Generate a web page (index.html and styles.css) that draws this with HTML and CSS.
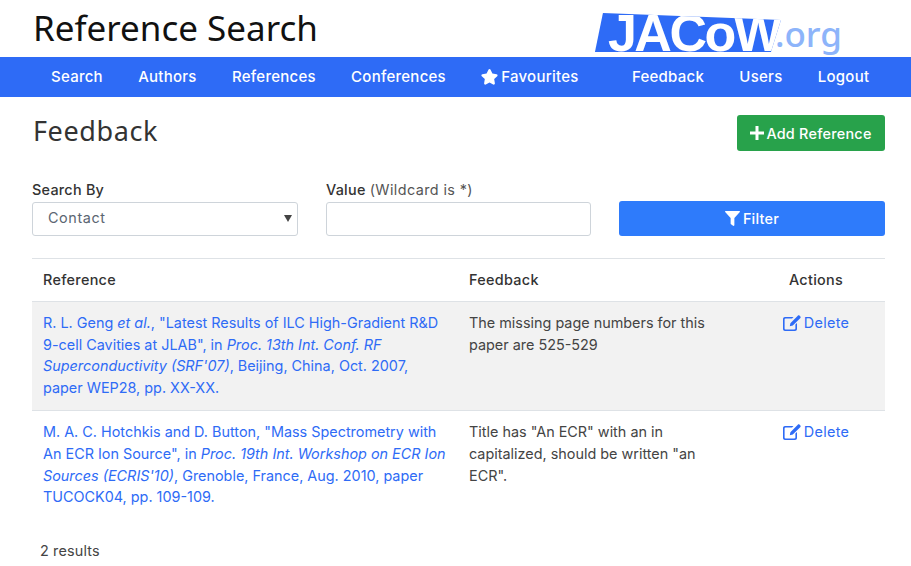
FILE: index.html
```html
<!DOCTYPE html>
<html lang="en">
<head>
  <meta charset="UTF-8" />
  <meta name="viewport" content="width=device-width, initial-scale=1.0"/>
  <title>Reference Search</title>
  <link rel="stylesheet" href="styles.css">
</head>
<body>

  <header class="top">
    <h1>Reference Search</h1>
    <a class="logo" href="#">
      <span class="logo-mark">JACoW</span><span class="logo-org">.org</span>
    </a>
  </header>

  <nav class="nav">
    <a href="#">Search</a>
    <a href="#">Authors</a>
    <a href="#">References</a>
    <a href="#">Conferences</a>
    <a href="#">
      <svg class="icon star" viewBox="0 0 24 24"><path d="M12 1.500c.7 0 1.200.4 1.500 1l2.600 5.400 5.900.8c1.400.2 1.900 1.900.9 2.800l-4.300 4.200 1 5.900c.2 1.400-1.200 2.400-2.400 1.800L12 20.600l-5.200 2.800c-1.200.6-2.600-.4-2.400-1.800l1-5.900-4.300-4.200c-1-.9-.5-2.600.9-2.800l5.900-.8 2.600-5.400c.3-.6.800-1 1.500-1z"/></svg>Favourites
    </a>
    <a class="nav-feedback" href="#">Feedback</a>
    <a href="#">Users</a>
    <a href="#">Logout</a>
  </nav>

  <main class="content">
    <div class="title-row">
      <h2>Feedback</h2>
      <button class="btn btn-green">
        <svg class="icon plus" viewBox="0 0 14 14"><path d="M5.500 0h3v5.500H14v3H8.500V14h-3V8.500H0v-3h5.500z"/></svg>Add Reference
      </button>
    </div>

    <form class="filters">
      <div class="field">
        <label>Search By</label>
        <div class="select">Contact<span class="caret"></span></div>
      </div>
      <div class="field">
        <label>Value <span class="hint">(Wildcard is *)</span></label>
        <input type="text" />
      </div>
      <button type="button" class="btn btn-blue">
        <svg class="icon funnel" viewBox="0 0 16 16"><path d="M.6 0h14.800c.5 0 .8.600.4 1L10 7.500V15c0 .8-.8 1.200-1.400.8L6.400 14c-.3-.2-.4-.5-.4-.8V7.500L.2 1C-.2.600.1 0 .6 0z"/></svg>Filter
      </button>
    </form>

    <table>
      <thead>
        <tr>
          <th>Reference</th>
          <th>Feedback</th>
          <th class="center">Actions</th>
        </tr>
      </thead>
      <tbody>
        <tr class="shaded">
          <td class="ref"><a href="#">R. L. Geng <em>et al.</em>, "Latest Results of ILC High-Gradient R&amp;D<br>9-cell Cavities at JLAB", in <em>Proc. 13th Int. Conf. RF<br>Superconductivity (SRF'07)</em>, Beijing, China, Oct. 2007,<br>paper WEP28, pp. XX-XX.</a></td>
          <td>The missing page numbers for this<br>paper are 525-529</td>
          <td class="center"><a href="#"><svg class="icon edit" viewBox="0 0 18 16"><path d="M2 2h8.500L9 3.600H2.500c-.5 0-.9.400-.9.900v9c0 .5.400.9.900.9h9c.5 0 .9-.4.900-.9V9.500L14 8v6c0 1.100-.9 2-2 2H2c-1.100 0-2-.9-2-2V4c0-1.100.9-2 2-2z"/><path d="M14.300 1.300l2.400 2.400L9.800 10.600l-3 .6.600-3zM15 .6c.4-.4 1-.4 1.400 0l1 1c.4.400.4 1 0 1.400l-.7.700-2.400-2.400z"/></svg>Delete</a></td>
        </tr>
        <tr>
          <td class="ref"><a href="#">M. A. C. Hotchkis and D. Button, "Mass Spectrometry with<br>An ECR Ion Source", in <em>Proc. 19th Int. Workshop on ECR Ion<br>Sources (ECRIS'10)</em>, Grenoble, France, Aug. 2010, paper<br>TUCOCK04, pp. 109-109.</a></td>
          <td>Title has "An ECR" with an in<br>capitalized, should be written "an<br>ECR".</td>
          <td class="center"><a href="#"><svg class="icon edit" viewBox="0 0 18 16"><path d="M2 2h8.500L9 3.600H2.500c-.5 0-.9.400-.9.900v9c0 .5.400.9.900.9h9c.5 0 .9-.4.900-.9V9.500L14 8v6c0 1.100-.9 2-2 2H2c-1.100 0-2-.9-2-2V4c0-1.100.9-2 2-2z"/><path d="M14.300 1.300l2.400 2.400L9.800 10.600l-3 .6.600-3zM15 .6c.4-.4 1-.4 1.400 0l1 1c.4.400.4 1 0 1.400l-.7.700-2.400-2.400z"/></svg>Delete</a></td>
        </tr>
      </tbody>
    </table>

    <p class="count">2 results</p>
  </main>

</body>
</html>
```

FILE: styles.css
```css
body {
  margin: 0;
  font-family: Inter, 'Liberation Sans', sans-serif;
  font-size: 14.4px;
  line-height: 21.6px;
  color: #444;
  background: white;
  overflow: hidden;
}
a {
  color: #2e6bf6;
  text-decoration: none;
}
.icon {
  fill: currentColor;
}

.top {
  height: 57px;
  display: flex;
  justify-content: space-between;
  padding: 0 69px 0 33px;
}
.top h1 {
  margin: 7px 0 0;
  font-family: 'Noto Sans', sans-serif;
  font-size: 35px;
  line-height: 41px;
  font-weight: 400;
  color: #111;
}
.logo {
  display: flex;
  align-items: flex-end;
  height: 52px;
}
.logo-mark {
  width: 186px;
  height: 39px;
  padding-left: 13px;
  box-sizing: border-box;
  background: #2e6bf6;
  clip-path: polygon(8px 0, 186px 7px, 176px 39px, 0 39px);
  color: white;
  font-family: 'Liberation Sans', sans-serif;
  font-weight: 700;
  font-size: 52px;
  line-height: 41px;
  letter-spacing: -2.500px;
  white-space: nowrap;
}
.logo-org {
  font-family: 'Noto Sans', sans-serif;
  font-size: 35px;
  font-weight: 500;
  line-height: 42px;
  color: #8db4fa;
  margin-bottom: -3px;
  margin-left: -6px;
}

.nav {
  height: 40px;
  background: #2e6bf6;
  display: flex;
  align-items: center;
  padding-left: 51px;
}
.nav a {
  color: white;
  margin-right: 35.300px;
  font-size: 15px;
  font-weight: 500;
  letter-spacing: .25px;
  display: flex;
  align-items: center;
}
.nav .nav-feedback {
  margin-left: 18px;
}
.star {
  width: 17px;
  height: 17px;
  margin: -2px 3px 0 0;
}

.content {
  padding: 0 26px 0 32px;
}
.title-row {
  display: flex;
  justify-content: space-between;
  align-items: flex-start;
  padding-top: 18px;
}
.title-row h2 {
  margin: -1px 0 0 1px;
  font-family: 'Noto Sans', sans-serif;
  font-size: 27px;
  line-height: 34px;
  font-weight: 400;
  letter-spacing: .6px;
  color: #333;
}
.btn {
  border: none;
  border-radius: 3px;
  color: white;
  font-family: inherit;
  font-size: 14.4px;
  font-weight: 500;
  letter-spacing: .25px;
  display: flex;
  align-items: center;
  justify-content: center;
}
.btn-green {
  background: #28a24b;
  width: 148px;
  height: 36px;
}
.btn-blue {
  background: #2e7bfb;
  height: 35px;
  margin-top: 22px;
}
.plus {
  width: 14px;
  height: 14px;
  margin-right: 2px;
}
.funnel {
  width: 15px;
  height: 15px;
  margin-right: 3px;
}

.filters {
  display: grid;
  grid-template-columns: 266px 265px 266px;
  column-gap: 28px;
  margin-top: 28px;
}
.field label {
  display: block;
  height: 23px;
  font-weight: 500;
  letter-spacing: .25px;
  color: #333;
}
.field .hint {
  font-weight: 400;
  letter-spacing: .4px;
  color: #555;
}
.select, .field input {
  box-sizing: border-box;
  display: block;
  width: 100%;
  height: 34px;
  border: 1px solid #ced4da;
  border-radius: 3px;
  background: white;
}
.select {
  position: relative;
  padding: 4px 15px;
  letter-spacing: .6px;
  color: #5b6672;
}
.caret {
  position: absolute;
  right: 5px;
  top: 12px;
  border: 4px solid transparent;
  border-top: 7px solid #444;
  border-bottom: none;
}

table {
  width: 853px;
  margin-top: 22px;
  border-collapse: collapse;
  table-layout: fixed;
}
th, td {
  padding: 10.500px 11px 11.500px;
  vertical-align: top;
  text-align: left;
  border-top: 1px solid #dee2e6;
}
th {
  font-weight: 500;
  letter-spacing: .3px;
  color: #333;
  padding: 10px 11px;
}
th:first-child, td:first-child {
  width: 404px;
}
th:nth-child(2), td:nth-child(2) {
  width: 267px;
}
.ref {
  white-space: nowrap;
}
.center {
  text-align: center;
  padding-left: 0;
  padding-right: 0;
}
.center a {
  display: inline-flex;
  align-items: center;
  letter-spacing: .3px;
}
.shaded {
  background: #f2f2f2;
}
.edit {
  width: 18px;
  height: 16px;
  margin-right: 3px;
}

.count {
  margin: 21px 0 0 8px;
  letter-spacing: .15px;
}
```
